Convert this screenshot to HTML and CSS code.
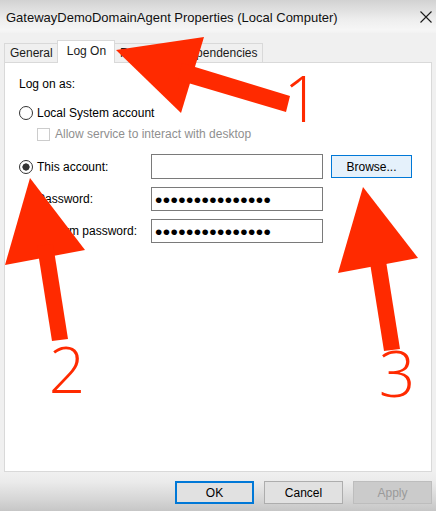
FILE: index.html
```html
<!DOCTYPE html>
<html>
<head>
<meta charset="utf-8">
<link rel="stylesheet" href="styles.css">
</head>
<body>
<div class="window">
  <header class="titlebar">
    <span class="title">GatewayDemoDomainAgent Properties (Local Computer)</span>
    <svg class="close" width="12" height="12" viewBox="0 0 12 12"><path d="M0.5 0.5 L11.5 11.5 M11.5 0.5 L0.5 11.5" stroke="#1a1a1a" stroke-width="1.1" fill="none"/></svg>
  </header>
  <main class="body">
    <nav class="tabs">
      <div class="tab">General</div>
      <div class="tab active">Log On</div>
      <div class="tab">Recovery</div>
      <div class="tab">Dependencies</div>
    </nav>
    <section class="panel">
      <div class="heading">Log on as:</div>
      <div class="option first"><span class="radio"></span><span>Local System account</span></div>
      <div class="check-row"><span class="checkbox"></span><span>Allow service to interact with desktop</span></div>
      <div class="account-grid">
        <div class="option"><span class="radio checked"></span><span>This account:</span></div>
        <div class="field"></div>
        <div class="browse">Browse...</div>
        <div class="sublabel">Password:</div>
        <div class="field"><span class="dots">•••••••••••••••</span></div>
        <div></div>
        <div class="sublabel">Confirm password:</div>
        <div class="field"><span class="dots">•••••••••••••••</span></div>
      </div>
    </section>
  </main>
  <footer class="footer">
    <div class="btn default">OK</div>
    <div class="btn">Cancel</div>
    <div class="btn disabled">Apply</div>
  </footer>
  <svg class="annotations" width="436" height="511" viewBox="0 0 436 511">
    <g fill="#ff2a00">
      <polygon points="116,50 204,37 181,113"/>
      <polygon points="182,63 178,80 286,112 290,96"/>
      <polygon points="30,178 5,265 85,250"/>
      <polygon points="37,246 53,244 68,339 52,341"/>
      <polygon points="363,187 338,273 418,258"/>
      <polygon points="370,263 386,261 400,349 384,351"/>
    </g>
    <g class="num">
      <text x="302" y="122">1</text>
      <text x="67" y="393">2</text>
      <text x="397" y="397">3</text>
    </g>
  </svg>
</div>
</body>
</html>
```

FILE: styles.css
```css
body {
  margin: 0;
  font-family: "Liberation Sans", Arial, sans-serif;
  font-size: 12px;
  color: #000;
}

.window {
  position: relative;
  width: 436px;
  height: 511px;
  display: flex;
  flex-direction: column;
  background: #f0f0f0;
  overflow: hidden;
}

.titlebar {
  height: 33px;
  flex: none;
  box-sizing: border-box;
  display: flex;
  align-items: center;
  justify-content: space-between;
  padding: 0 4px 0 6px;
  background: linear-gradient(#d2d2d2, #eeeeee 60%, #f6f6f6 90%, #f2f2f2);
}

.title {
  font-size: 13px;
  color: #111;
  padding-top: 1px;
}

.close {
  display: block;
}

.body {
  flex: none;
  padding: 7px 4px 0 4px;
}

.tabs {
  display: flex;
  align-items: flex-end;
  height: 22px;
}

.tab {
  height: 19px;
  box-sizing: border-box;
  border: 1px solid #d9d9d9;
  border-bottom: none;
  padding: 0 4px 0 5px;
  line-height: 18px;
  background: #f0f0f0;
  margin-right: -1px;
  color: #1a1a1a;
}

.tab.active {
  position: relative;
  z-index: 1;
  height: 23px;
  margin-bottom: -1px;
  line-height: 21px;
  padding: 0 8px 0 9px;
  background: #fff;
}

.panel {
  height: 410px;
  box-sizing: border-box;
  background: #fff;
  border: 1px solid #d9d9d9;
  padding: 14px 0 0 14px;
}

.heading {
  line-height: 14px;
  height: 14px;
}

.option {
  display: flex;
  align-items: center;
  gap: 4px;
  height: 16px;
}

.option.first {
  margin-top: 14px;
}

.radio {
  width: 14px;
  height: 14px;
  box-sizing: border-box;
  border: 1px solid #333;
  border-radius: 50%;
  background: #fff;
  flex: none;
}

.radio.checked {
  background: radial-gradient(circle, #333 0 3.3px, #fff 3.9px);
}

.check-row {
  display: flex;
  align-items: center;
  gap: 5px;
  height: 14px;
  margin: 6px 0 0 18px;
  color: #8f8f8f;
}

.checkbox {
  width: 13px;
  height: 13px;
  box-sizing: border-box;
  border: 1px solid #cccccc;
  background: #fff;
  flex: none;
}

.account-grid {
  margin-top: 13px;
  display: grid;
  grid-template-columns: 124px 172px 81px;
  grid-template-rows: 25px 24px 24px;
  column-gap: 8px;
  row-gap: 8px;
  align-items: center;
}

.sublabel {
  padding-left: 18px;
}

.field {
  height: 100%;
  box-sizing: border-box;
  border: 1px solid #7a7a7a;
  background: #fff;
  display: flex;
  align-items: center;
  padding-left: 3px;
  overflow: hidden;
}

.dots {
  font-size: 21px;
  line-height: 1;
  letter-spacing: 0.4px;
  color: #000;
}

.browse {
  height: 23px;
  box-sizing: border-box;
  border: 1px solid #0078d7;
  background: #e5f1fb;
  display: flex;
  align-items: center;
  justify-content: center;
}

.footer {
  flex: 1;
  display: flex;
  justify-content: flex-end;
  align-items: flex-start;
  gap: 10px;
  padding: 9px 4px 0 4px;
  background: linear-gradient(#f0f0f0 0, #ebebeb 25%, #d6d6d6 70%, #c6c6c6 100%);
}

.btn {
  width: 79px;
  height: 23px;
  box-sizing: border-box;
  border: 1px solid #adadad;
  background: #e1e1e1;
  display: flex;
  align-items: center;
  justify-content: center;
}

.btn.default {
  border: 2px solid #0078d7;
}

.btn.disabled {
  background: #cbcbcb;
  border-color: #bdbdbd;
  color: #9a9a9a;
}

.annotations {
  position: absolute;
  left: 0;
  top: 0;
  pointer-events: none;
}

.num text {
  font-family: "Open Sans", "Noto Sans", sans-serif;
  font-weight: 300;
  font-size: 64px;
  fill: #ff2a00;
  text-anchor: middle;
}
```
